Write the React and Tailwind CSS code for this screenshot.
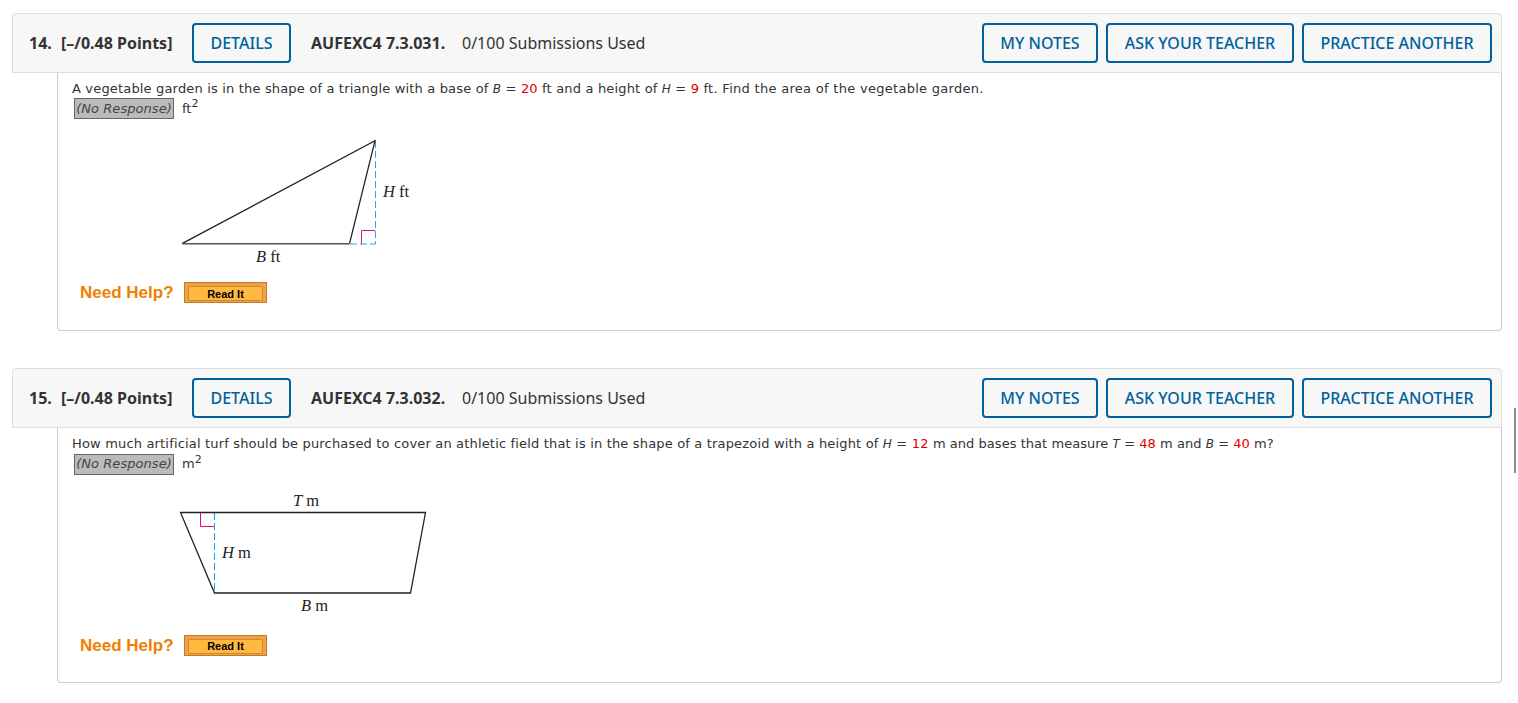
import React from 'react';

const Var = ({ children }) => <i className="text-[12px]">{children}</i>;
const Num = ({ children }) => <span className="text-[#e00000]">{children}</span>;

function HeaderButton({ children, className = '' }) {
    return (
        <button className={`h-10 rounded border-2 border-[#00629b] text-[16px] font-[550] text-[#00629b] ${className}`}>
            {children}
        </button>
    );
}

function Question({ num, code, children, unit, figure, responseClass = 'mt-[1px]' }) {
    return (
        <section>
            <header className="flex h-[60px] items-center rounded-t-sm border border-[#dddddd] bg-[#f7f7f7] pl-4 pr-[9px] font-['Noto_Sans',sans-serif] text-[#333333]">
                <span className="w-[32px] text-[16px] font-bold">{num}.</span>
                <span className="w-[131px] text-[16px] font-bold">[–/0.48 Points]</span>
                <HeaderButton className="w-[99px]">DETAILS</HeaderButton>
                <span className="ml-5 w-[151px] text-[16px] font-bold">{code}.</span>
                <span className="text-[16px]">0/100 Submissions Used</span>
                <div className="ml-auto flex gap-2">
                    <HeaderButton className="w-[116px]">MY NOTES</HeaderButton>
                    <HeaderButton className="w-[188px]">ASK YOUR TEACHER</HeaderButton>
                    <HeaderButton className="w-[190px]">PRACTICE ANOTHER</HeaderButton>
                </div>
            </header>
            <div className="ml-[45px] rounded-b-sm border-x border-b border-[#cccccc] pb-[24px] pl-[14px] font-['DejaVu_Sans',sans-serif] text-[13px] text-[#333333]">
                <p className="pt-[8px] leading-[16px] tracking-[0.17px]">{children}</p>
                <div className={`flex h-[21px] items-center ${responseClass}`}>
                    <span className="ml-[2px] flex h-[21px] w-[100px] items-center justify-center border border-[#666666] bg-[#bbbbbb] text-[13px] italic tracking-[0.05px] text-[#444444]">
                        (No Response)
                    </span>
                    <span className="ml-2">{unit}<sup className="text-[11px]">2</sup></span>
                </div>
                {figure}
                <div className="flex items-center pl-2 font-['Liberation_Sans',sans-serif]">
                    <span className="w-[104px] text-[17px] font-bold text-[#ee7f00]">Need Help?</span>
                    <button className="h-[21px] w-[83px] border border-[#c07a2c] bg-[#f4a040] px-[3px] pb-[2px] pt-[3px]">
                        <span className="flex h-[15px] items-center justify-center rounded-[1px] border border-[#c88a3a] bg-[#ffb840] text-[11px] font-bold text-black">
                            Read It
                        </span>
                    </button>
                </div>
            </div>
        </section>
    );
}

function TriangleFigure() {
    return (
        <svg width="350" height="145" viewBox="72 135 350 145" className="mt-[16px] block">
            <path d="M375.5 141V244M350 244H375.5" fill="none" stroke="#29abe2" strokeWidth="1" strokeDasharray="7 3" />
            <path d="M375 230.5H361.5V244" fill="none" stroke="#d6168b" strokeWidth="1" />
            <path d="M182 243.6L375 140.8L349.5 243.6" fill="none" stroke="#222222" strokeWidth="1.3" />
            <path d="M182 243.7H349.5" stroke="#555555" strokeWidth="1.6" />
            <text x="383" y="197" fontFamily="Liberation Serif" fontSize="16.5" fill="#222222"><tspan fontStyle="italic">H</tspan> ft</text>
            <text x="256" y="262" fontFamily="Liberation Serif" fontSize="16.5" fill="#222222"><tspan fontStyle="italic">B</tspan> ft</text>
        </svg>
    );
}

function TrapezoidFigure() {
    return (
        <svg width="370" height="143" viewBox="72 490 370 143" className="mt-[15px] block">
            <path d="M214.5 513V593" fill="none" stroke="#00aeef" strokeWidth="1" strokeDasharray="7 3" />
            <path d="M200.5 513V526.5H214" fill="none" stroke="#ec008c" strokeWidth="1" />
            <path d="M180.5 512.5H425.5L410.5 593H214.5Z" fill="none" stroke="#222222" strokeWidth="1.3" />
            <text x="293" y="506" fontFamily="Liberation Serif" fontSize="16.5" fill="#222222"><tspan fontStyle="italic">T</tspan> m</text>
            <text x="222" y="558" fontFamily="Liberation Serif" fontSize="16.5" fill="#222222"><tspan fontStyle="italic">H</tspan> m</text>
            <text x="301" y="611" fontFamily="Liberation Serif" fontSize="16.5" fill="#222222"><tspan fontStyle="italic">B</tspan> m</text>
        </svg>
    );
}

export default function App() {
    return (
        <div className="relative h-[703px] overflow-hidden bg-white pl-3 pr-4 pt-[13px]">
            <div className="flex flex-col gap-[37px]">
                <Question
                    num="14"
                    code="AUFEXC4 7.3.031"
                    unit="ft"
                    figure={<TriangleFigure />}
                >
                    A vegetable garden is in the shape of a triangle with a base of <Var>B</Var> = <Num>20</Num> ft and a height of <Var>H</Var> = <Num>9</Num> <span className="tracking-[0.29px]">ft. Find the area of the vegetable garden.</span>
                </Question>
                <Question
                    num="15"
                    code="AUFEXC4 7.3.032"
                    unit="m"
                    responseClass="mt-[2px]"
                    figure={<TrapezoidFigure />}
                >
                    How much artificial turf should be purchased to cover an athletic field that is in the shape of a trapezoid with a height of <Var>H</Var> = <Num>12</Num> <span className="tracking-[0.04px]">m and bases that measure <Var>T</Var> = <Num>48</Num> m and <Var>B</Var> = <Num>40</Num> m?</span>
                </Question>
            </div>
            {/* scrollbar thumb */}
            <div className="absolute right-[2px] top-[408px] h-[65px] w-[2px] bg-[#8a8a8a]" />
        </div>
    );
}
